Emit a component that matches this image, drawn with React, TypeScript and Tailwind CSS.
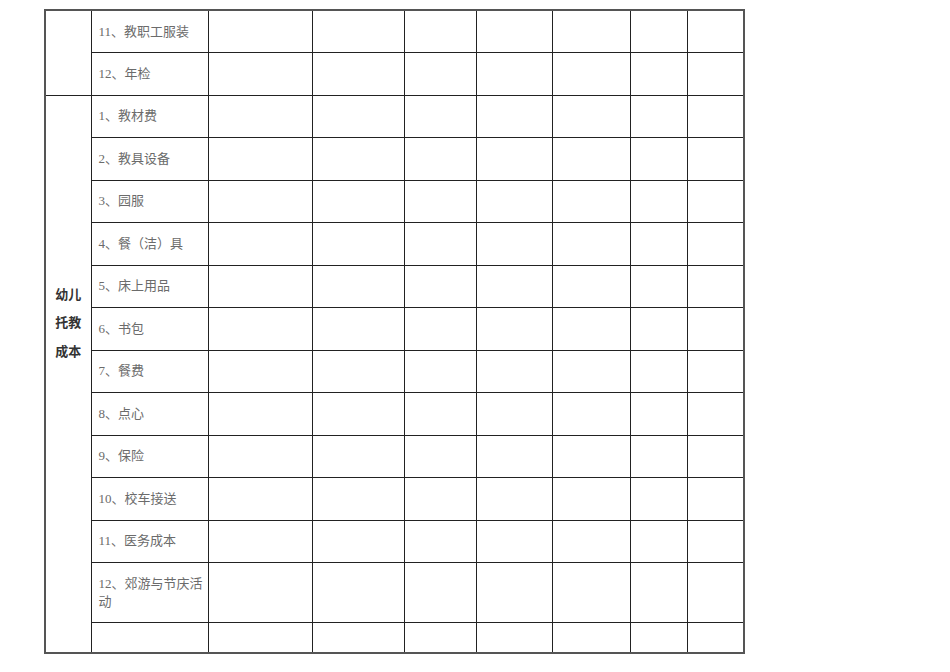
const topRows = ["11、教职工服装", "12、年检"];

const costRows = [
    "1、教材费",
    "2、教具设备",
    "3、园服",
    "4、餐（洁）具",
    "5、床上用品",
    "6、书包",
    "7、餐费",
    "8、点心",
    "9、保险",
    "10、校车接送",
    "11、医务成本",
];

const colWidths = [46, 117, 104, 92, 72, 76, 78, 57, 57];

function EmptyCells() {
    return (
        <>
            {colWidths.slice(2).map((_, i) => (
                <td key={i} className="border border-[#222]"></td>
            ))}
        </>
    );
}

function ItemCell({text}: {text: string}) {
    return (
        <td className="border border-[#222] pl-[7px] pr-[4px] text-[13px] leading-[18px] text-[#6b6b6b] align-middle">
            {text}
        </td>
    );
}

export default function App() {
    return (
        <div
            className="w-[950px] h-[672px] bg-white pt-[9px] pl-[44px]"
            style={{fontFamily: '"Liberation Serif", "Noto Sans CJK SC", serif'}}
        >
            <table className="table-fixed border-collapse w-[701px] border-2 border-[#555]">
                <colgroup>
                    {colWidths.map((w, i) => (
                        <col key={i} style={{width: w}} />
                    ))}
                </colgroup>
                <tbody>
                    {topRows.map((t, i) => (
                        <tr key={t} className="h-[42.5px]">
                            {i === 0 && <td rowSpan={2} className="border border-[#222] border-l-2 border-l-[#555]"></td>}
                            <ItemCell text={t} />
                            <EmptyCells />
                        </tr>
                    ))}
                    {costRows.map((t, i) => (
                        <tr key={t} className="h-[42.5px]">
                            {i === 0 && (
                                <td
                                    rowSpan={13}
                                    className="border border-[#222] border-l-2 border-l-[#555] border-b-2 border-b-[#555] align-top pt-[184px] text-center text-[13px] leading-[28.5px] font-bold text-[#333]"
                                    style={{fontFamily: '"Noto Sans CJK SC", sans-serif'}}
                                >
                                    幼儿<br />托教<br />成本
                                </td>
                            )}
                            <ItemCell text={t} />
                            <EmptyCells />
                        </tr>
                    ))}
                    <tr className="h-[60px]">
                        <ItemCell text="12、郊游与节庆活动" />
                        <EmptyCells />
                    </tr>
                    <tr className="h-[30px]">
                        <td className="border border-[#222] border-b-2 border-b-[#555]"></td>
                        {colWidths.slice(2).map((_, i) => (
                            <td key={i} className="border border-[#222] border-b-2 border-b-[#555]"></td>
                        ))}
                    </tr>
                </tbody>
            </table>
        </div>
    );
}
